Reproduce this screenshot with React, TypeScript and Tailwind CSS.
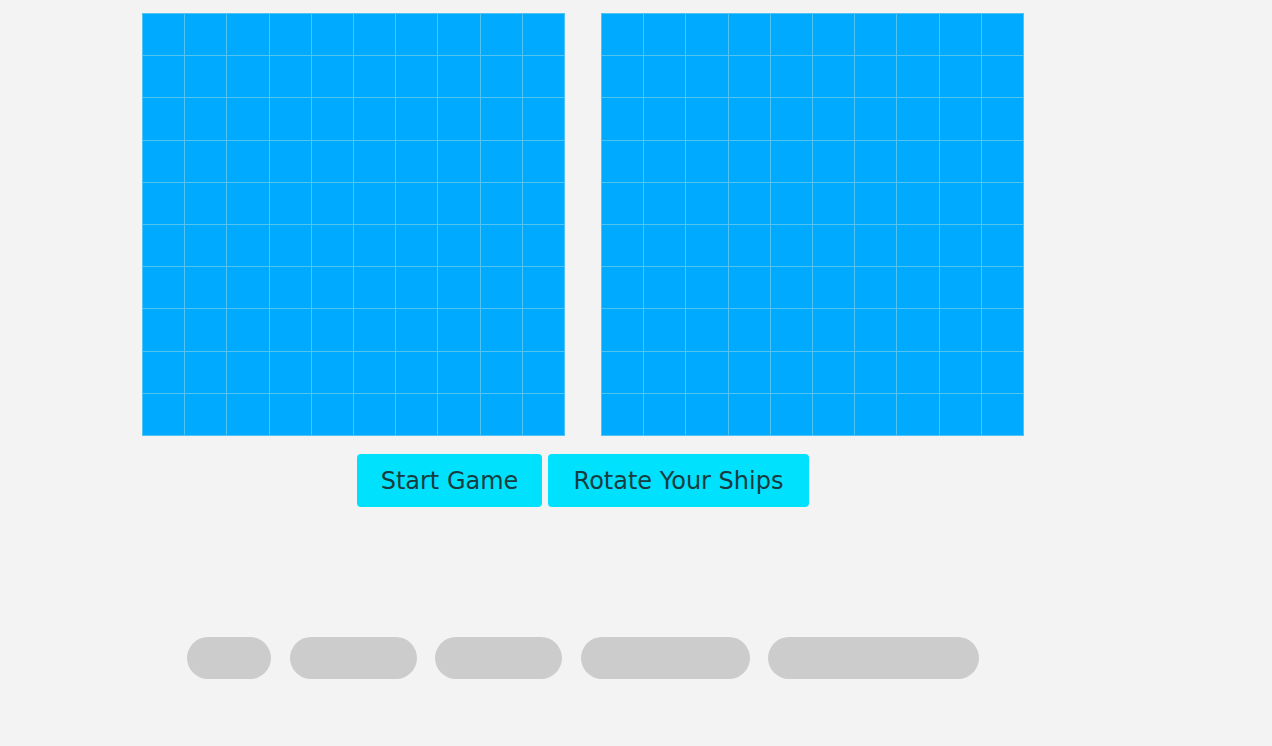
const cells = Array.from({ length: 100 }, (_, i) => i);

function Board() {
  return (
    <div className="grid h-[423px] w-[423px] grid-cols-10 grid-rows-10 gap-px bg-[#52c4f3] p-px">
      {cells.map((i) => (
        <div key={i} className="bg-[#00aaff]" />
      ))}
    </div>
  );
}

const ships = [
  { name: 'destroyer', w: 'w-[84px]' },
  { name: 'submarine', w: 'w-[127px]' },
  { name: 'cruiser', w: 'w-[127px]' },
  { name: 'battleship', w: 'w-[169px]' },
  { name: 'carrier', w: 'w-[211px]' },
];

export default function App() {
  return (
    <div className="min-h-[746px] bg-[#f3f3f3]" style={{ fontFamily: '"DejaVu Sans", "Open Sans", sans-serif' }}>
      <div className="flex w-[1166px] flex-col items-center pt-[13px]">
        <div className="flex gap-[36px]">
          <Board />
          <Board />
        </div>

        <div className="mt-[18px] flex gap-[6px]">
          <button className="h-[53px] w-[185px] rounded-[4px] bg-[#00e1fd] text-[24px] text-[#173c40]">
            Start Game
          </button>
          <button className="h-[53px] w-[261px] rounded-[4px] bg-[#00e1fd] text-[24px] text-[#173c40]">
            Rotate Your Ships
          </button>
        </div>

        <div className="mt-[130px] flex gap-[18.5px]">
          {ships.map((s) => (
            <div key={s.name} className={`h-[42px] ${s.w} rounded-full bg-[#cccccc]`} />
          ))}
        </div>
      </div>
    </div>
  );
}
